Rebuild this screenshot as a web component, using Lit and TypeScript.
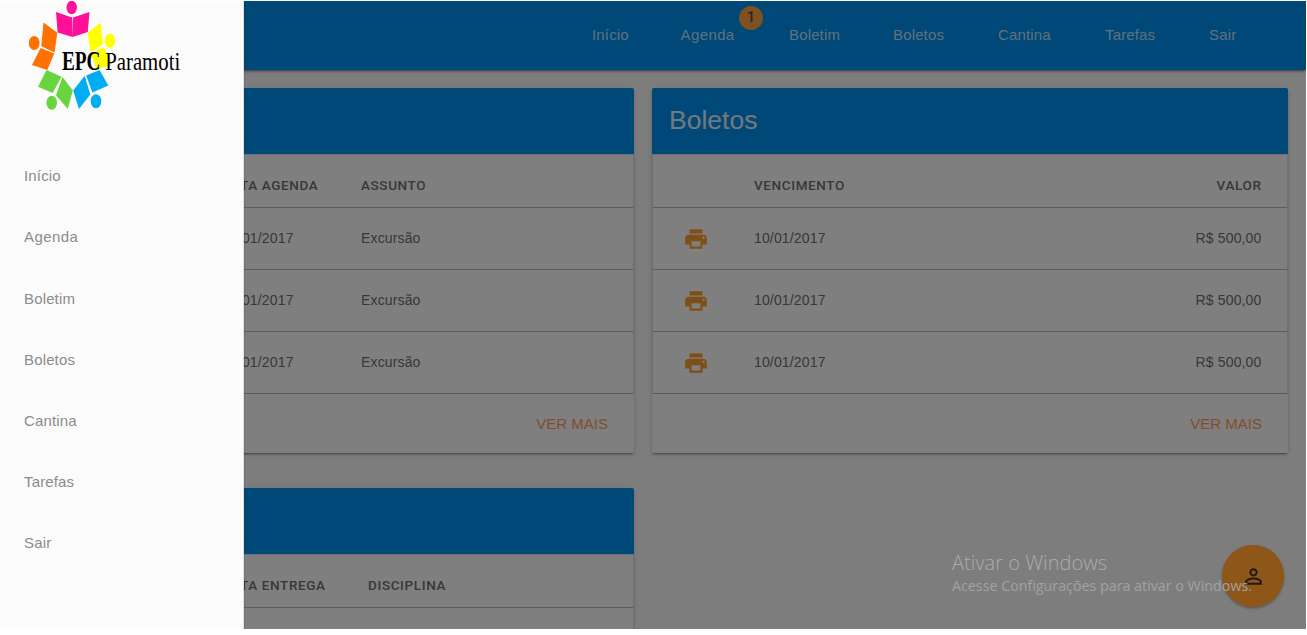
import { LitElement, html, css, svg } from "lit";
import { customElement, property } from "lit/decorators.js";

const LINKS = ["Início", "Agenda", "Boletim", "Boletos", "Cantina", "Tarefas", "Sair"];

@customElement("school-logo")
class SchoolLogo extends LitElement {
  static styles = css`
    :host { display: block; height: 112px; }
    svg { display: block; }
    text { font-family: "Liberation Serif", "Times New Roman", serif; fill: #000; }
    .bold { font-weight: 700; }
  `;
  render() {
    return html`<svg width="244" height="112" viewBox="0 1 244 112">
      <g fill="#ff1097"><ellipse cx="71.7" cy="7.500" rx="5.2" ry="6.800"/><path d="M56 12 72.2 17.5 72.6 37 57.6 32.6ZM89.5 12 87.8 32 72.6 37 73 17.5Z"/></g>
      <g fill="#ff7200"><ellipse cx="34.2" cy="43" rx="5.4" ry="7"/><path d="M43.5 22.5 57.3 32.8 54.6 52.6 41.3 46.3ZM40.6 48 54.3 53.6 47.3 70 32 65Z"/></g>
      <g fill="#ffff00"><ellipse cx="110" cy="40.8" rx="5.4" ry="7"/><path d="M100.7 22.7 102.8 44.6 90.5 52 87.8 32.5ZM90.2 53.4 104 47.2 112 64 97 70Z"/></g>
      <g fill="#68d440"><ellipse cx="51.7" cy="102.7" rx="5.3" ry="7"/><path d="M46.5 70 61.6 76.8 52.6 93 38 86.8ZM62.5 77 72.8 90.4 67.8 109 56 95.3Z"/></g>
      <g fill="#00adf2"><ellipse cx="96" cy="101.3" rx="5.3" ry="7"/><path d="M99.5 70 108.3 85.6 92.4 92.4 86.2 75.5ZM84.7 75.8 90.3 94.4 79 109 73.2 90.6Z"/></g>
      <text class="bold" x="62" y="70.2" font-size="27" textLength="38.5" lengthAdjust="spacingAndGlyphs">EPC</text>
      <text x="105.2" y="70.2" font-size="25.5" textLength="75" lengthAdjust="spacingAndGlyphs">Paramoti</text>
    </svg>`;
  }
}

@customElement("data-card")
class DataCard extends LitElement {
  @property() heading = "";
  @property() kind = "agenda";
  @property({ attribute: false }) columns: string[] = [];
  @property({ attribute: false }) rows: string[][] = [];
  static styles = css`
    :host { display: block; height: 365px; border-radius: 2px; background: #fff; color: #757575;
      box-shadow: 0 2px 2px 0 rgba(0,0,0,.14), 0 3px 1px -2px rgba(0,0,0,.2), 0 1px 5px 0 rgba(0,0,0,.12); }
    .title { height: 66px; box-sizing: border-box; padding: 16px 17px; background: #0090f0; color: #fff;
      border-radius: 2px 2px 0 0; font-size: 26.5px; line-height: 32px; }
    .title span { opacity: .9; }
    .table { border: 1px solid rgba(0,0,0,.12); border-bottom-color: rgba(0,0,0,.18); height: 240px; box-sizing: border-box; color: #707070; }
    .row { display: grid; align-items: center; height: 62px; box-sizing: border-box; font-size: 14px; letter-spacing: .15px; padding-bottom: 1px; border-bottom: 1px solid rgba(0,0,0,.28); }
    .row:last-child { border-bottom-color: rgba(0,0,0,.14); }
    .row.head { height: 53px; font: 500 13.5px Roboto, sans-serif; letter-spacing: .62px; padding-top: 8px; padding-bottom: 0; border-bottom-color: rgba(0,0,0,.28); }
    .agenda { grid-template-columns: 203px 139px 1fr; }
    .tarefas { grid-template-columns: 203px 146px 1fr; }
    .boletos { grid-template-columns: 101px 1fr 1fr; padding-right: 25.5px; }
    .boletos > :last-child { text-align: right; }
    svg { display: block; margin: 1px 0 0 30px; fill: #ff9e30; }
    .actions { height: 59px; box-sizing: border-box; padding: 21px 26px 0; text-align: right; color: #ff9c58; font-size: 15px; line-height: 18px; }
  `;
  render() {
    const cell = (c: string) => c === "print"
      ? html`<svg width="26" height="26" viewBox="0 0 24 24"><path d="M19 8H5c-1.66 0-3 1.34-3 3v6h4v4h12v-4h4v-6c0-1.66-1.34-3-3-3zm-3 11H8v-5h8v5zm3-7c-.55 0-1-.45-1-1s.45-1 1-1 1 .45 1 1-.45 1-1 1zm-1-9H6v4h12V3z"/></svg>`
      : html`<span>${c}</span>`;
    return html`<div class="title"><span>${this.heading}</span></div>
      <div class="table">
        <div class="row head ${this.kind}">${this.columns.map((c) => html`<span>${c}</span>`)}</div>
        ${this.rows.map((r) => html`<div class="row ${this.kind}">${r.map(cell)}</div>`)}
      </div>
      ${this.rows.length ? html`<div class="actions">VER MAIS</div>` : ""}`;
  }
}

@customElement("app-root")
class AppRoot extends LitElement {
  static styles = css`
    :host { display: block; height: 635px; box-sizing: border-box; padding: 1px 1px 6px 0; background: #fff; overflow: hidden;
      font-family: "Liberation Sans", Arial, sans-serif; }
    .screen { position: relative; height: 628px; overflow: hidden; background: #fafafa; }
    .bar { height: 69px; box-sizing: border-box; background: #0090f0; display: grid; justify-content: end; align-items: center;
      grid-template-columns: 89px 108px 104px 105px 107px 104px 97px; font-size: 15px; color: rgba(255,255,255,.75); letter-spacing: .15px;
      box-shadow: 0 2px 2px 0 rgba(0,0,0,.18), 0 3px 1px -2px rgba(0,0,0,.2), 0 1px 5px 0 rgba(0,0,0,.12); }
    .link { position: relative; line-height: 18px; padding-bottom: 1px; }
    .link:nth-child(2) { letter-spacing: .4px; margin-left: -.5px; }
    .badge { position: absolute; left: 58.5px; top: -20px; width: 24px; height: 24px; border-radius: 50%; background: #ffa040;
      color: #484848; font: 500 14px/23px Roboto, sans-serif; text-align: center; letter-spacing: 0; }
    .cards { display: grid; grid-template-columns: 616px 636px; gap: 35px 18px; padding: 18px 18px 0; }
    .shade { position: absolute; inset: 0; background: rgba(0,0,0,.5); }
    .fab { position: absolute; left: 1222px; top: 544px; width: 62px; height: 62px; border-radius: 50%; background: #8e5618; display: grid;
      place-items: center; box-shadow: 0 1px 3px rgba(0,0,0,.2), 0 2px 2px rgba(0,0,0,.1); }
    .drawer { position: absolute; left: 0; top: 0; bottom: 0; width: 244px; box-sizing: border-box; background: #fbfbfb;
      border-right: 1px solid #e0e0e0; box-shadow: 0 0 2px rgba(0,0,0,.25); }
    .menu { display: flex; flex-direction: column; padding: 32.2px 24px 0; font-size: 15px; color: #8c8c8c; letter-spacing: .15px; }
    .item { height: 61.15px; display: flex; align-items: center; }
    .item:nth-child(2) { letter-spacing: .45px; }
    .notice { position: absolute; left: 952px; top: 546px; display: block; }
    .notice text { font-family: "Open Sans", "Noto Sans", sans-serif; fill: #a2a2a2; }
    .notice .large { font-weight: 300; fill: #acacac; }
  `;
  render() {
    return html`<div class="screen">
      <nav class="bar">${LINKS.map((l) => html`<span class="link">${l}${l === "Agenda" ? html`<span class="badge">1</span>` : ""}</span>`)}</nav>
      <main class="cards">
        <data-card kind="agenda" .columns=${["", "DATA AGENDA", "ASSUNTO"]}
          .rows=${[0, 1, 2].map(() => ["", "10/01/2017", "Excursão"])}></data-card>
        <data-card heading="Boletos" kind="boletos" .columns=${["", "VENCIMENTO", "VALOR"]}
          .rows=${[0, 1, 2].map(() => ["print", "10/01/2017", "R$ 500,00"])}></data-card>
        <data-card kind="tarefas" .columns=${["", "DATA ENTREGA", "DISCIPLINA"]} .rows=${[]}></data-card>
      </main>
      <div class="shade"></div>
      <div class="fab"><svg width="25" height="25" viewBox="0 0 24 24" fill="#201a14"><path d="M12 5.900c1.160 0 2.100.94 2.100 2.100s-.94 2.100-2.100 2.100S9.900 9.160 9.900 8s.94-2.100 2.100-2.100m0 9c2.970 0 6.100 1.460 6.100 2.100v1.100H5.900V17c0-.64 3.130-2.100 6.100-2.100M12 4C9.790 4 8 5.790 8 8s1.790 4 4 4 4-1.790 4-4-1.790-4-4-4zm0 9c-2.670 0-8 1.340-8 4v3h16v-3c0-2.660-5.330-4-8-4z"/></svg></div>
      <aside class="drawer">
        <school-logo></school-logo>
        <div class="menu">${LINKS.map((l) => html`<span class="item">${l}</span>`)}</div>
      </aside>
      <svg class="notice" width="310" height="60">
        ${svg`<text class="large" x="0" y="23" font-size="20" textLength="155">Ativar o Windows</text>
        <text x="0" y="44" font-size="14.500" textLength="300" lengthAdjust="spacingAndGlyphs">Acesse Configurações para ativar o Windows.</text>`}
      </svg>
    </div>`;
  }
}
